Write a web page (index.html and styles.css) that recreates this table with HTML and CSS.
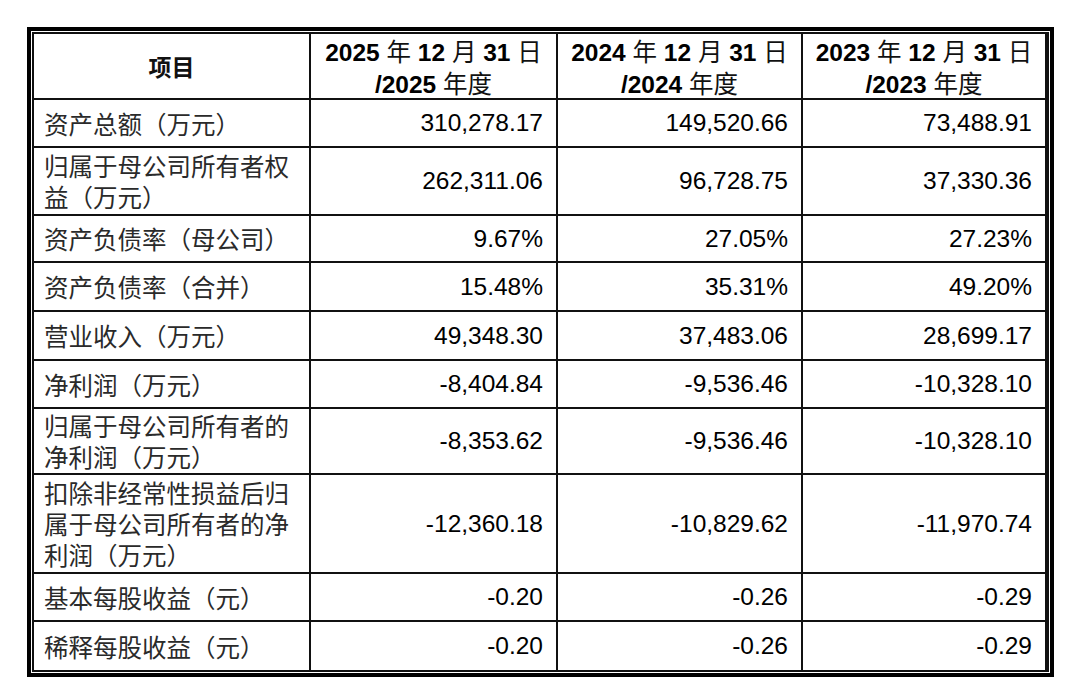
FILE: index.html
```html
<!DOCTYPE html>
<html lang="zh-CN">
<head>
<meta charset="utf-8">
<title>主要财务数据</title>
<link rel="stylesheet" href="styles.css">
</head>
<body>
<div class="frame">
  <div class="sheet">
    <div class="cell head label-head">项目</div>
    <div class="cell head"><div><b>2025</b> 年 <b>12</b> 月 <b>31</b> 日</div><div><b>/2025</b> 年度</div></div>
    <div class="cell head"><div><b>2024</b> 年 <b>12</b> 月 <b>31</b> 日</div><div><b>/2024</b> 年度</div></div>
    <div class="cell head"><div><b>2023</b> 年 <b>12</b> 月 <b>31</b> 日</div><div><b>/2023</b> 年度</div></div>

    <div class="cell label">资产总额（万元）</div>
    <div class="cell num">310,278.17</div>
    <div class="cell num">149,520.66</div>
    <div class="cell num">73,488.91</div>

    <div class="cell label">归属于母公司所有者权<br>益（万元）</div>
    <div class="cell num">262,311.06</div>
    <div class="cell num">96,728.75</div>
    <div class="cell num">37,330.36</div>

    <div class="cell label">资产负债率（母公司）</div>
    <div class="cell num">9.67%</div>
    <div class="cell num">27.05%</div>
    <div class="cell num">27.23%</div>

    <div class="cell label">资产负债率（合并）</div>
    <div class="cell num">15.48%</div>
    <div class="cell num">35.31%</div>
    <div class="cell num">49.20%</div>

    <div class="cell label">营业收入（万元）</div>
    <div class="cell num">49,348.30</div>
    <div class="cell num">37,483.06</div>
    <div class="cell num">28,699.17</div>

    <div class="cell label">净利润（万元）</div>
    <div class="cell num">-8,404.84</div>
    <div class="cell num">-9,536.46</div>
    <div class="cell num">-10,328.10</div>

    <div class="cell label">归属于母公司所有者的<br>净利润（万元）</div>
    <div class="cell num">-8,353.62</div>
    <div class="cell num">-9,536.46</div>
    <div class="cell num">-10,328.10</div>

    <div class="cell label">扣除非经常性损益后归<br>属于母公司所有者的净<br>利润（万元）</div>
    <div class="cell num">-12,360.18</div>
    <div class="cell num">-10,829.62</div>
    <div class="cell num">-11,970.74</div>

    <div class="cell label">基本每股收益（元）</div>
    <div class="cell num">-0.20</div>
    <div class="cell num">-0.26</div>
    <div class="cell num">-0.29</div>

    <div class="cell label">稀释每股收益（元）</div>
    <div class="cell num">-0.20</div>
    <div class="cell num">-0.26</div>
    <div class="cell num">-0.29</div>
  </div>
</div>
</body>
</html>
```

FILE: styles.css
```css
html, body {
  margin: 0;
  padding: 0;
  background: #ffffff;
}

body {
  width: 1080px;
  height: 695px;
  overflow: hidden;
  font-family: "Liberation Sans", "Noto Sans CJK SC", sans-serif;
}

.frame {
  margin: 27px 0 0 27px;
  width: 1017px;
  border: 4px solid #000;
  padding: 1px;
  background: #fff;
}

.sheet {
  display: grid;
  grid-template-columns: 275px 245px 243px 242px;
  grid-template-rows: 64px 46px 66px 45px 47px 47px 46px 64px 97px 46px 48px;
  gap: 2px;
  padding: 2px;
  background: #111;
}

.cell {
  background: #fff;
  display: flex;
  font-size: 24.5px;
  color: #000;
}

.head {
  flex-direction: column;
  align-items: center;
  justify-content: center;
  line-height: 32px;
  padding-top: 6px;
  box-sizing: border-box;
  font-family: "Liberation Sans", "Noto Sans CJK SC", sans-serif;
  color: #111;
}

.head b {
  font-weight: 700;
  color: #000;
}

.label-head {
  font-family: "Noto Sans CJK SC", sans-serif;
  font-weight: 700;
  font-size: 23px;
  padding-top: 0;
}

.label {
  align-items: center;
  padding-left: 10px;
  line-height: 31px;
  font-family: "Noto Sans CJK SC", sans-serif;
  font-weight: 400;
  color: #2a2a2a;
  white-space: nowrap;
}

.num {
  align-items: center;
  justify-content: flex-end;
  padding-right: 13px;
  font-family: "Liberation Sans", sans-serif;
  color: #000;
}
```
